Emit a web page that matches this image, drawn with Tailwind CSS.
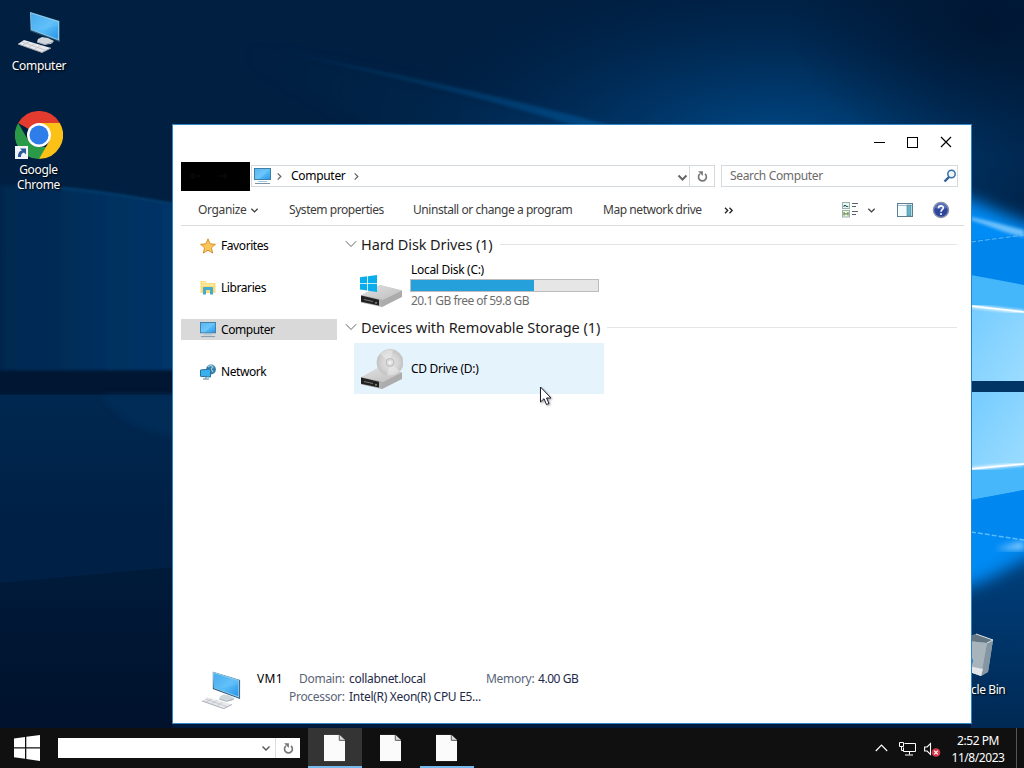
<!DOCTYPE html>
<html lang="en">
<head>
<meta charset="utf-8">
<title>Computer</title>
<script src="https://cdn.jsdelivr.net/npm/@tailwindcss/browser@4"></script>
</head>
<body class="w-[1024px] h-[768px] overflow-hidden bg-[#011d3f] font-['Noto_Sans','Open_Sans',sans-serif] text-[12px] leading-[16px] tracking-[-0.3px]">
<svg width="0" height="0" class="absolute">
  <defs>
    <linearGradient id="scr" x1="0" y1="0" x2="1" y2="1"><stop offset="0" stop-color="#369fe6"/><stop offset=".55" stop-color="#58bcf8"/><stop offset="1" stop-color="#2b96e8"/></linearGradient>
    <linearGradient id="drv" x1="0" y1="0" x2="1" y2="1"><stop offset="0" stop-color="#e2e2e2"/><stop offset="1" stop-color="#bdbdbd"/></linearGradient>
    <radialGradient id="disc"><stop offset="0" stop-color="#e6e6e6"/><stop offset=".7" stop-color="#d2d2d2"/><stop offset="1" stop-color="#c2c2c2"/></radialGradient>
    <symbol id="pc" viewBox="0 0 44 42">
      <path d="M13 1 43 10V31L13 20Z" fill="#2b5672"/><path d="M13 1 42 10V29.500L14 19Z" fill="#8ecbed"/><path d="M14 2.500 41 11V28L14.500 18.500Z" fill="url(#scr)"/><path d="M14 2.500 41 11V15L19 20 14.500 18.500Z" fill="#7fd0ff" opacity=".25"/>
      <path d="M25 26 31 27 37 30 34 33 27 33.500 20 31 21 28Z" fill="#cfd6dc"/><path d="M20 31 28 33.500 36 31" stroke="#a5adb4" fill="none"/>
      <path d="M7 29 34 37 25 41.500 1 33Z" fill="#e8e9ec"/><path d="M1 33 25 41.500 34 37" stroke="#a2a7ae" fill="none"/><path d="M5 31 29 39.500M12 31 6 34M18 32.500 12 36M24 34.500 18 38" stroke="#b4b9c0" stroke-width=".7"/>
    </symbol>
    <symbol id="mon" viewBox="0 0 17 17">
      <rect x=".5" y=".5" width="16" height="11" fill="url(#scr)" stroke="#3e7fa6"/><path d="M1 1h15L5 11H1z" fill="#8ed6ff" opacity=".4"/><path d="M4 13.500h9" stroke="#9cc9e2"/><path d="M1 15.500h15" stroke="#7b95a6"/>
    </symbol>
    <symbol id="drive" viewBox="0 0 43 23">
      <path d="M1 11.500 20 1 42 6.500V12L23 22.500 1 17.500Z" fill="#c4c4c4"/><path d="M1 11.500 20 1 42 6.500 22 16.500Z" fill="url(#drv)"/><path d="M22 16.500 42 6.500V13L22 23Z" fill="#acacac"/><path d="M1 11 22 15.500V23L1 18.500Z" fill="#b0b0b0"/><path d="M1 11.500 19 15.800V21.500L1 17.800Z" fill="#222"/><path d="M4 15.500 13 17.500" stroke="#777"/><circle cx="16" cy="18.800" r=".9" fill="#93ab88"/>
    </symbol>
    <symbol id="chev" viewBox="0 0 10 7"><path d="M1.500 1.500 5 5 8.500 1.500" fill="none" stroke="currentColor" stroke-width="1.400"/></symbol>
    <symbol id="reload" viewBox="0 0 12 14"><path d="M3.200 4.200a4.300 4.300 0 1 0 5.500 0" fill="none" stroke="currentColor" stroke-width="1.800"/><path d="M2 1.200h5.200v5.200z" fill="currentColor" transform="translate(-.8 0)"/></symbol>
    <symbol id="doc" viewBox="0 0 22 28"><path d="M0 0h16l6 6v22H0z" fill="#fbfbfb"/><path d="M16 0v6h6" fill="#d8d8d8" stroke="#555" stroke-width="1"/></symbol>
    <symbol id="flag" viewBox="0 0 26 26"><path d="M0 3.500 11 2v10.300H0zM12.300 1.800 26 0v12.300H12.300zM0 13.500h11v10.300L0 22.300zM12.300 13.500H26V26l-13.700-2z" fill="currentColor"/></symbol>
  </defs>
</svg>

<!-- Wallpaper -->
<svg class="absolute left-0 top-0" width="1024" height="768" viewBox="0 0 1024 768" preserveAspectRatio="none">
  <defs>
    <radialGradient id="g1"><stop offset="0" stop-color="#004c8c"/><stop offset=".45" stop-color="#003e76" stop-opacity=".6"/><stop offset="1" stop-color="#002a58" stop-opacity="0"/></radialGradient>
    <radialGradient id="g3"><stop offset="0" stop-color="#00142e" stop-opacity=".75"/><stop offset="1" stop-color="#00142e" stop-opacity="0"/></radialGradient>
    <linearGradient id="lft" x1="0" y1="0" x2="1" y2="0"><stop offset="0" stop-color="#00284f"/><stop offset="1" stop-color="#003468"/></linearGradient>
    <linearGradient id="low" x1="0" y1="0" x2="0" y2="1"><stop offset="0" stop-color="#002850"/><stop offset=".7" stop-color="#002045"/><stop offset="1" stop-color="#002145"/></linearGradient>
    <linearGradient id="bot" x1="0" y1="0" x2="0" y2="1"><stop offset="0" stop-color="#001b3a"/><stop offset="1" stop-color="#00112c"/></linearGradient>
    <linearGradient id="ray" x1="240" y1="40" x2="640" y2="130" gradientUnits="userSpaceOnUse"><stop offset="0" stop-color="#03497f" stop-opacity="0"/><stop offset="1" stop-color="#075090" stop-opacity=".8"/></linearGradient>
    <linearGradient id="p1" x1="0" y1="0" x2="1" y2="1"><stop offset="0" stop-color="#74ccff"/><stop offset="1" stop-color="#9cdcff"/></linearGradient>
    <linearGradient id="rdn" x1="0" y1="0" x2="0" y2="1"><stop offset="0" stop-color="#00498c"/><stop offset="1" stop-color="#002954"/></linearGradient>
    <filter id="b1"><feGaussianBlur stdDeviation="1.500"/></filter>
    <filter id="b4" x="-20%" y="-20%" width="140%" height="140%"><feGaussianBlur stdDeviation="3"/></filter>
    <filter id="b6" x="-50%" y="-50%" width="200%" height="200%"><feGaussianBlur stdDeviation="8"/></filter>
  </defs>
  <rect width="1024" height="768" fill="#001f41"/>
  <ellipse cx="775" cy="150" rx="380" ry="175" fill="url(#g1)"/>
  <path d="M172 25 640 135V165H440Z" fill="url(#ray)" opacity=".3" filter="url(#b6)"/>
  <path d="M230 38 C340 65 490 90 640 134 L600 134 C490 96 340 68 230 38Z" fill="url(#ray)" filter="url(#b1)"/>
  <ellipse cx="985" cy="25" rx="200" ry="130" fill="url(#g3)"/>
  <path d="M0 185 C60 186 120 196 174 205V371H0Z" fill="url(#lft)" filter="url(#b1)"/>
  <path d="M60 188 C110 192 140 199 174 204" stroke="#08528c" stroke-width="2" fill="none" filter="url(#b1)" opacity=".8"/>
  <rect x="-10" y="371" width="190" height="23" fill="#001630" filter="url(#b1)"/>
  <path d="M0 395H174V567L0 583Z" fill="url(#low)"/>
  <path d="M100 395H190V440C145 435 120 420 100 395Z" fill="#00315f" opacity=".5" filter="url(#b4)"/>
  <path d="M0 583 174 567V730H0Z" fill="url(#bot)"/>
  <rect x="172" y="720" width="800" height="10" fill="#001a3c"/>
  <rect x="971" y="480" width="53" height="250" fill="url(#rdn)"/>
  <path d="M940 190 C980 200 1010 220 1050 230V300H940Z" fill="#008cf6" filter="url(#b6)"/>
  <path d="M940 470H1060V545C1010 560 990 588 940 592Z" fill="#008af4" filter="url(#b6)"/>
  <path d="M971 240 1024 234V300H971Z" fill="#0085ec"/>
  <path d="M971 217 C990 221 1008 226 1024 230V237C1004 233 990 226 971 220Z" fill="#90d2ff" opacity=".75" filter="url(#b1)"/>
  <path d="M971 242 1024 235" stroke="#55baff" stroke-dasharray="5 2"/>
  <path d="M971 275 1024 285V382H971Z" fill="#44b6fa"/>
  <path d="M971 306 1024 312V382H971Z" fill="url(#p1)"/>
  <path d="M971 306 1024 312" stroke="#f4fbff" stroke-width="3" filter="url(#b1)"/><path d="M971 306 1024 312" stroke="#fff" stroke-width="1.500"/>
  <rect x="971" y="381" width="53" height="11" fill="#003565"/>
  <path d="M971 392H1024V490L971 500Z" fill="#46b7fa"/>
  <path d="M971 392H1024V464L971 469Z" fill="url(#p1)"/>
  <path d="M971 469 1024 464" stroke="#f4fbff" stroke-width="3" filter="url(#b1)"/><path d="M971 469 1024 464" stroke="#fff" stroke-width="1.500"/>
  <path d="M971 500 1024 490V540L971 533Z" fill="#0088f0"/>
  <path d="M971 532 1024 540" stroke="#58bcff" stroke-width="1.500" stroke-dasharray="5 2"/>
  <path d="M995 549 1024 541V550Z" fill="#84ccff" filter="url(#b4)"/>
</svg>

<!-- Desktop icons -->
<div class="absolute left-0 top-[11px] w-[78px] flex flex-col items-center text-white [text-shadow:1px_1px_2px_#000]">
  <svg width="44" height="42"><use href="#pc"/></svg>
  <span class="mt-[5px]">Computer</span>
</div>
<div class="absolute left-0 top-[111px] w-[78px] flex flex-col items-center text-white text-center [text-shadow:1px_1px_2px_#000]">
  <svg width="48" height="48" viewBox="0 0 48 48">
    <path d="M24 24 3.200 12A24 24 0 0 1 44.800 12Z" fill="#e33b2e"/>
    <path d="M3.200 12 13.600 30 24 36H34.400L24 48A24 24 0 0 1 3.200 12Z" fill="#2a9a48"/>
    <path d="M34.400 30 24 48A24 24 0 0 0 44.800 12H24Z" fill="#fbc116"/>
    <circle cx="24" cy="24" r="12" fill="#fff"/><circle cx="24" cy="24" r="9.500" fill="#2f7de9"/>
    <rect x="0" y="35" width="13" height="13" fill="#f0f4f8"/><path d="M3 46C3 41 5 40 7 39.500L5 37.500H11V43.500L9 41.500C7 42 6 43 6 46Z" fill="#2a5a98"/>
  </svg>
  <span class="mt-[3px] -ml-px leading-[15px]">Google<br>Chrome</span>
</div>
<div class="absolute left-[937px] top-[633px] w-[78px] flex flex-col items-center text-white [text-shadow:1px_1px_2px_#000]">
  <svg width="44" height="46" viewBox="0 0 44 46">
    <path d="M5 7 22 1 39 7 34 39 27 43 10 37Z" fill="#9ba9b4"/><path d="M22 1 39 7 33 10 5 7Z" fill="#657683"/><path d="M33 10 39 7 34 39 27 43Z" fill="#8596a3"/><path d="M5 7 33 10 27 43 10 37Z" fill="#a8b4bc"/><path d="M10 32 29 36 27 43 10 37Z" fill="#e3e6e8"/><path d="M22 1 39 7 33 10" fill="none" stroke="#d8e2e8"/><circle cx="14" cy="28" r="5" fill="#2083c4"/>
  </svg>
  <span class="mt-[3px] whitespace-nowrap tracking-[-0.4px]">Recycle Bin</span>
</div>

<!-- Explorer window -->
<main class="absolute left-[172px] top-[124px] w-[800px] h-[600px] border border-[#2f86c4] bg-white flex flex-col">
  <header class="h-[36px] flex items-center justify-end pr-[19px] pb-[2px] gap-[22px] shrink-0">
    <svg width="11" height="11" shape-rendering="crispEdges"><path d="M0 5.500h11" stroke="#000"/></svg>
    <svg width="11" height="11" shape-rendering="crispEdges"><rect x=".5" y=".5" width="10" height="10" fill="none" stroke="#000"/></svg>
    <svg width="12" height="12"><path d="M1 1 11 11M11 1 1 11" stroke="#000" stroke-width="1.200"/></svg>
  </header>
  <div class="flex items-center h-[30px] pl-[8px] shrink-0">
    <div class="w-[69px] h-[29px] bg-black flex items-center gap-[18px] pl-[9px]">
      <svg width="10" height="8"><path d="M10 4H1M4 1 1 4l3 3" stroke="#0d0d0d" fill="none"/></svg>
      <svg width="10" height="8"><path d="M0 4h9M6 1l3 3-3 3" stroke="#0d0d0d" fill="none"/></svg>
    </div>
    <div class="ml-px w-[464px] h-[22px] border border-[#d4dade] flex items-center">
      <svg class="ml-[2px]" width="17" height="17"><use href="#mon"/></svg>
      <svg class="ml-[4px] text-[#666] -rotate-90" width="9" height="7"><use href="#chev"/></svg>
      <span class="ml-[7px] text-black tracking-[-0.3px]">Computer</span>
      <svg class="ml-[6px] text-[#666] -rotate-90" width="9" height="7"><use href="#chev"/></svg>
      <svg class="ml-auto mt-[3px] text-[#666]" width="11" height="8" viewBox="0 0 11 8"><path d="M1.500 1.500 5.500 5.500 9.500 1.500" fill="none" stroke="currentColor" stroke-width="2"/></svg>
      <div class="ml-px w-[25px] h-full border-l border-[#d4dade] flex items-center justify-center text-[#777]"><svg width="11" height="13"><use href="#reload"/></svg></div>
    </div>
    <div class="ml-[6px] w-[237px] h-[22px] border border-[#d4dade] flex items-center justify-between pl-[8px] text-[#6b6b6b]">
      <span class="tracking-[-0.35px]">Search Computer</span>
      <svg width="14" height="14" viewBox="0 0 14 14"><circle cx="8.500" cy="5" r="3.700" fill="#eef6fb" stroke="#3a6ea5" stroke-width="1.500"/><path d="M6 8 1.500 12.500" stroke="#2f5f98" stroke-width="2.400"/></svg>
    </div>
  </div>
  <nav class="ml-[8px] mr-[7px] h-[35px] border-b border-[#dcdcdc] flex items-center pl-[17px] pt-[4px] text-[#3c3c3c] shrink-0 whitespace-nowrap tracking-[-0.44px]">
    <span class="w-[52px] tracking-[-0.35px]">Organize</span>
    <svg width="9" height="7"><use href="#chev"/></svg>
    <span class="ml-[30px] w-[124px]">System properties</span>
    <span class="w-[190px]">Uninstall or change a program</span>
    <span class="w-[121px]">Map network drive</span>
    <svg width="10" height="7" viewBox="0 0 10 7"><path d="M1 .8 3.700 3.500 1 6.200M5.500 .8 8.200 3.500 5.500 6.200" fill="none" stroke="#222" stroke-width="1.300"/></svg>
    <svg class="ml-[108px]" width="17" height="16" viewBox="0 0 17 16"><rect x=".5" y=".5" width="7" height="6" fill="#edf7f2" stroke="#98b3aa"/><path d="M2 5V3.500h2V4.500h2V5" stroke="#275c66" fill="none"/><rect x=".5" y="8.500" width="7" height="6.500" fill="#eef5df" stroke="#98b3aa"/><path d="M2 13.500v-3l2 2 2-2v3" stroke="#466d2f" fill="none"/><path d="M10 1.500h6M10 4.500h4M10 9.500h6M10 12.500h4" stroke="#56616d"/></svg>
    <svg class="ml-[8px]" width="9" height="7"><use href="#chev"/></svg>
    <svg class="ml-[21px]" width="16" height="14" viewBox="0 0 16 14"><rect x=".5" y=".5" width="15" height="13" fill="#f5fafc" stroke="#5f7d90"/><path d="M1 2.500h14" stroke="#a3bccb"/><rect x="10" y="2" width="4" height="11" fill="#62b5cb" stroke="#4e8197" stroke-width=".6"/></svg>
    <svg class="ml-[19px]" width="18" height="18" viewBox="0 0 18 18"><circle cx="9" cy="9" r="7.500" fill="#2e469c" stroke="#8790ac" stroke-width="1.500"/><path d="M3 7a6 5 0 0 1 12 0q-6 2-12 0" fill="#6a83ce" opacity=".65"/><path d="M6.500 7.200C6.500 4 11.500 4.200 11.300 7 11.200 8.700 9 8.600 9 10.700" fill="none" stroke="#fff" stroke-width="1.600"/><circle cx="9" cy="13" r="1" fill="#fff"/></svg>
  </nav>
  <div class="flex flex-1 min-h-0">
    <aside class="ml-[8px] pt-[9px] w-[156px] flex flex-col gap-[21px] text-black tracking-[-0.42px]">
      <div class="h-[21px] pl-[19px] flex items-center gap-[5px]">
        <svg width="16" height="16" viewBox="0 0 16 16"><path d="m8 .8 2.100 5 5.400.5-4.100 3.500 1.300 5.300L8 12.200l-4.700 2.900 1.300-5.300L.5 6.300l5.400-.5z" fill="#fac659" stroke="#d38b28" stroke-width=".9"/></svg>Favorites
      </div>
      <div class="h-[21px] pl-[19px] flex items-center gap-[5px]">
        <svg width="16" height="16" viewBox="0 0 16 16"><path d="M.5 1h5l1.500 2h8.500v10H.5z" fill="#f7dc7c"/><path d="M2 2.500h5M2 5h12" stroke="#fff2b5"/><path d="M3 14.500V8q0-1 1-1h8q1 0 1 1v6.500h-3V10H6v4.500z" fill="#45a8cd"/></svg>Libraries
      </div>
      <div class="h-[21px] pl-[19px] flex items-center gap-[5px] bg-[#d9d9d9]">
        <svg width="16" height="16"><use href="#mon"/></svg>Computer
      </div>
      <div class="h-[21px] pl-[19px] flex items-center gap-[5px]">
        <svg width="16" height="16" viewBox="0 0 16 16"><circle cx="11" cy="5.500" r="4.900" fill="#367da8"/><path d="M8 3q3-3 5 0l-2 2 2 3" fill="none" stroke="#94cfdb" stroke-width="1.300"/><path d="M.5 6 10.500 5v8l-10-.7z" fill="#3cb0ee" stroke="#28729e"/><path d="M6 13v1.500M3 15h6" stroke="#56809a"/></svg>Network
      </div>
    </aside>
    <section class="ml-[8px] mr-[14px] flex-1 text-black">
      <h2 class="mt-[8px] h-[20px] flex items-center gap-[4px] text-[14.500px] leading-[20px] tracking-[-0.1px] text-[#1c1c1c]">
        <svg class="text-[#666]" width="12" height="8" viewBox="0 0 12 8"><path d="M.8 1.200 6 6.500l5.200-5.300" fill="none" stroke="currentColor"/></svg>
        <span>Hard Disk Drives (1)</span><i class="ml-[3px] h-px flex-1 bg-[#e4e4e4]"></i>
      </h2>
      <div class="mt-[8px] pl-[15px] flex h-[55px]">
        <div class="w-[43px] pt-[13px]">
          <svg width="43" height="33" viewBox="0 0 43 33"><use href="#drive" y="9" width="43" height="23"/><use href="#flag" width="17" height="17" color="#08adeb"/></svg>
        </div>
        <div class="ml-[7px]">
          <div class="pl-px leading-[16px]">Local Disk (C:)</div>
          <div class="mt-px w-[189px] h-[13px] border border-[#bcbcbc] bg-[#e6e6e6]"><div class="h-full bg-[#26a0da]" style="width:66%"></div></div>
          <div class="mt-px pl-px leading-[16px] text-[#6d6d6d] tracking-[-0.52px]">20.1 GB free of 59.8 GB</div>
        </div>
      </div>
      <h2 class="h-[20px] flex items-center gap-[4px] text-[14.500px] leading-[20px] tracking-[-0.07px] text-[#1c1c1c]">
        <svg class="text-[#666]" width="12" height="8" viewBox="0 0 12 8"><path d="M.8 1.200 6 6.500l5.200-5.300" fill="none" stroke="currentColor"/></svg>
        <span>Devices with Removable Storage (1)</span><i class="ml-[3px] h-px flex-1 bg-[#e4e4e4]"></i>
      </h2>
      <div class="mt-[6px] ml-[9px] pl-[6px] w-[250px] h-[51px] bg-[#e5f3fd] flex items-center gap-[8px]">
        <svg width="43" height="42" viewBox="0 0 43 42"><use href="#drive" y="18" width="43" height="23"/><circle cx="30" cy="14.500" r="13" fill="url(#disc)" stroke="#c6c6c6"/><path d="M30 14.500 20 6Q26 0 33 2ZM30 14.500 40 23Q34 29 27 27Z" fill="#f0f0f0" opacity=".5"/><circle cx="30" cy="14.500" r="4" fill="#dedede" stroke="#b8b8b8"/><circle cx="30" cy="14.500" r="1.500" fill="#f4f4f4"/></svg>
        <span>CD Drive (D:)</span>
      </div>
    </section>
  </div>
  <footer class="h-[64px] shrink-0 flex pl-[28px] text-[#1e2a4a] whitespace-nowrap">
    <svg class="mt-[11px]" width="40" height="40" viewBox="0 0 44 42"><use href="#pc"/></svg>
    <div class="ml-[16px] mt-[12px] w-[27px] text-black tracking-[0.3px]">VM1</div>
    <div class="ml-[5px] mt-[12px] w-[55px] grid grid-rows-[18px_18px] justify-items-end text-[#5a6477]"><span>Domain:</span><span>Processor:</span></div>
    <div class="ml-[5px] mt-[12px] w-[137px] grid grid-rows-[18px_18px]"><span>collabnet.local</span><span>Intel(R) Xeon(R) CPU E5...</span></div>
    <div class="mt-[12px] text-[#5a6477] w-[52px]">Memory:</div>
    <div class="mt-[12px] tracking-[-0.45px]">4.00 GB</div>
  </footer>
</main>

<!-- Mouse pointer -->
<svg class="absolute left-[539px] top-[386px] drop-shadow-[1px_1px_1px_rgba(0,0,0,.4)]" width="14" height="21" viewBox="0 0 14 21"><path d="M1.500 1v15l3.500-3.300L7.500 18.500l2.500-1-2.500-5.500h4.500z" fill="#fff" stroke="#1d1d30"/></svg>

<!-- Taskbar -->
<div class="absolute left-0 top-[728px] w-[1024px] h-[40px] bg-[#101010] flex items-center text-white">
  <svg class="ml-[14px] text-white" width="26" height="26"><use href="#flag"/></svg>
  <div class="ml-[18px] w-[242px] h-[20px] bg-white flex items-center justify-end text-[#555]">
    <svg width="10" height="7"><use href="#chev"/></svg>
    <div class="ml-[4px] w-[25px] h-full border-l border-[#ddd] flex items-center justify-center text-[#777]"><svg width="11" height="13"><use href="#reload"/></svg></div>
  </div>
  <div class="ml-[8px] w-[54px] h-[40px] bg-[#343434] border-b-2 border-[#76b9ed] flex items-center pt-[2px] pl-[16px]"><svg width="21" height="28" viewBox="0 0 22 28"><use href="#doc"/></svg></div>
  <div class="ml-[2px] w-[54px] h-[40px] border-b-2 border-transparent flex items-center pt-[2px] pl-[16px]"><svg width="21" height="28" viewBox="0 0 22 28"><use href="#doc"/></svg></div>
  <div class="ml-[2px] w-[54px] h-[40px] border-b-2 border-[#76b9ed] flex items-center pt-[2px] pl-[16px]"><svg width="21" height="28" viewBox="0 0 22 28"><use href="#doc"/></svg></div>
  <div class="ml-auto flex items-center h-full">
    <svg width="13" height="8" viewBox="0 0 13 8"><path d="M.8 7 6.500 1.200 12.200 7" fill="none" stroke="#fff" stroke-width="1.200"/></svg>
    <svg class="ml-[11px] mt-[2px]" width="17" height="14" viewBox="0 0 17 14"><path d="M5.500 1.500h11v8h-12v-4M10.500 9.500v3M6 13h8" fill="none" stroke="#fff"/><path d="M.5 .5h4v4h-4zM2.500 4.500v4h2" fill="none" stroke="#fff"/></svg>
    <svg class="ml-[8px] mt-[3px]" width="17" height="16" viewBox="0 0 17 16"><path d="M.6 5h2.500L6.500 1.500v11L3.100 9H.6z" fill="none" stroke="#fff" stroke-width="1.100"/><circle cx="12" cy="10.500" r="4.300" fill="#d9384b"/><path d="m10.200 8.700 3.600 3.600m0-3.600-3.600 3.600" stroke="#fff" stroke-width="1.200"/></svg>
    <div class="ml-[7px] w-[60px] text-center leading-[17px] pt-px tracking-[-0.45px]">2:52 PM<br>11/8/2023</div>
    <div class="ml-[8px] mr-[7px] w-px h-full bg-[#555]"></div>
  </div>
</div>
</body>
</html>
